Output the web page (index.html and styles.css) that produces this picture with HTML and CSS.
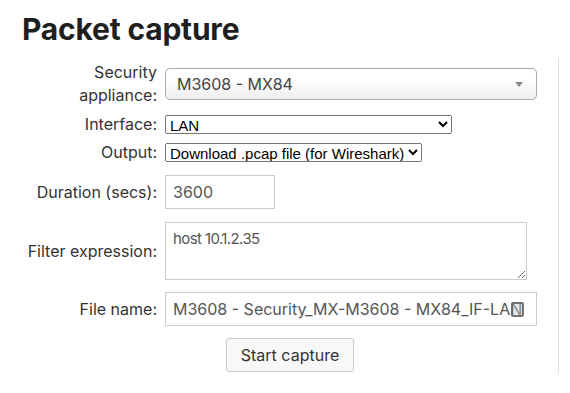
FILE: index.html
```html
<!DOCTYPE html>
<html lang="en">
<head>
  <meta charset="UTF-8">
  <title>Packet capture</title>
  <link rel="stylesheet" href="styles.css">
</head>
<body>
  <h1 class="page-title">Packet capture</h1>

  <form class="capture-form">
    <div class="row row-appliance">
      <label class="row-label">Security appliance:</label>
      <div class="fancy-select">
        <span class="fancy-value">M3608 - MX84</span>
        <span class="fancy-arrow"></span>
      </div>
    </div>

    <div class="row row-iface">
      <label class="row-label">Interface:</label>
      <select class="native-select iface-select">
        <option>LAN</option>
      </select>
    </div>

    <div class="row row-output">
      <label class="row-label">Output:</label>
      <select class="native-select">
        <option>Download .pcap file (for Wireshark)</option>
      </select>
    </div>

    <div class="row row-duration">
      <label class="row-label">Duration (secs):</label>
      <input type="text" class="text-field duration-field" value="3600">
    </div>

    <div class="row">
      <label class="row-label">Filter expression:</label>
      <textarea class="text-field filter-field">host 10.1.2.35</textarea>
    </div>

    <div class="row">
      <label class="row-label">File name:</label>
      <div class="file-wrap">
        <input type="text" class="text-field file-field" value="M3608 - Security_MX-M3608 - MX84_IF-LAN">
        <span class="field-badge"></span>
      </div>
    </div>

    <div class="actions">
      <button type="button" class="start-btn">Start capture</button>
    </div>
  </form>
</body>
</html>
```

FILE: styles.css
```css
body {
  margin: 0;
  padding: 0 0 0 22px;
  font-family: Inter, "Noto Sans", sans-serif;
  color: #333;
  background: #fff;
}

.page-title {
  margin: 0;
  padding-top: 11px;
  height: 58px;
  box-sizing: border-box;
  font-family: Inter, sans-serif;
  font-size: 30px;
  font-weight: 700;
  line-height: 36px;
  color: #1f1f1f;
  letter-spacing: -0.2px;
}

.capture-form {
  width: 536px;
  border-right: 1px solid #ddd;
  padding-top: 3px;
  padding-bottom: 1px;
}

.row {
  display: flex;
  align-items: center;
  gap: 8px;
  margin-bottom: 12px;
}

.row-appliance { margin-bottom: 6px; }
.row-iface { margin-bottom: 5px; }
.row-output { margin-bottom: 11px; }
.row-duration { margin-bottom: 13px; }

.row-label {
  width: 135px;
  flex: none;
  text-align: right;
  font-size: 16px;
  line-height: 23px;
  color: #333;
}

.fancy-select {
  position: relative;
  width: 372px;
  height: 32px;
  box-sizing: border-box;
  border: 1px solid #aaa;
  border-radius: 5px;
  background: linear-gradient(#fff 30%, #eee 100%);
  display: flex;
  align-items: center;
  padding-left: 11px;
  font-size: 16px;
  color: #444;
}

.fancy-arrow {
  position: absolute;
  right: 13px;
  top: 13px;
  border-top: 5px solid #888;
  border-left: 4px solid transparent;
  border-right: 4px solid transparent;
}

.native-select {
  font-family: "Liberation Sans", Arial, sans-serif;
  font-size: 15px;
  height: 19px;
  color: #000;
}

.iface-select {
  width: 287px;
}

.text-field {
  box-sizing: border-box;
  border: 1px solid #ccc;
  font-family: Inter, sans-serif;
  font-size: 16px;
  color: #555;
  outline: none;
}

.duration-field {
  width: 110px;
  height: 34px;
  padding: 0 7px;
}

.filter-field {
  width: 362px;
  height: 58px;
  padding: 6px 7px;
  resize: vertical;
  margin: 0;
  font-size: 15px;
  letter-spacing: -0.6px;
}

.file-wrap {
  position: relative;
}

.file-field {
  display: block;
  width: 372px;
  height: 34px;
  padding: 0 6px 0 7px;
}

/* autofill helper badge drawn over the field's end */
.field-badge {
  position: absolute;
  right: 13px;
  top: 10px;
  width: 9px;
  height: 11px;
  border: 2px solid rgba(95, 95, 95, 0.85);
  border-radius: 2px;
  background: rgba(200, 200, 200, 0.45);
}

.actions {
  display: flex;
  justify-content: center;
}

.start-btn {
  width: 128px;
  height: 34px;
  background: #f8f8f8;
  border: 1px solid #ccc;
  border-radius: 3px;
  font-family: Inter, sans-serif;
  font-size: 16px;
  color: #333;
}
```
